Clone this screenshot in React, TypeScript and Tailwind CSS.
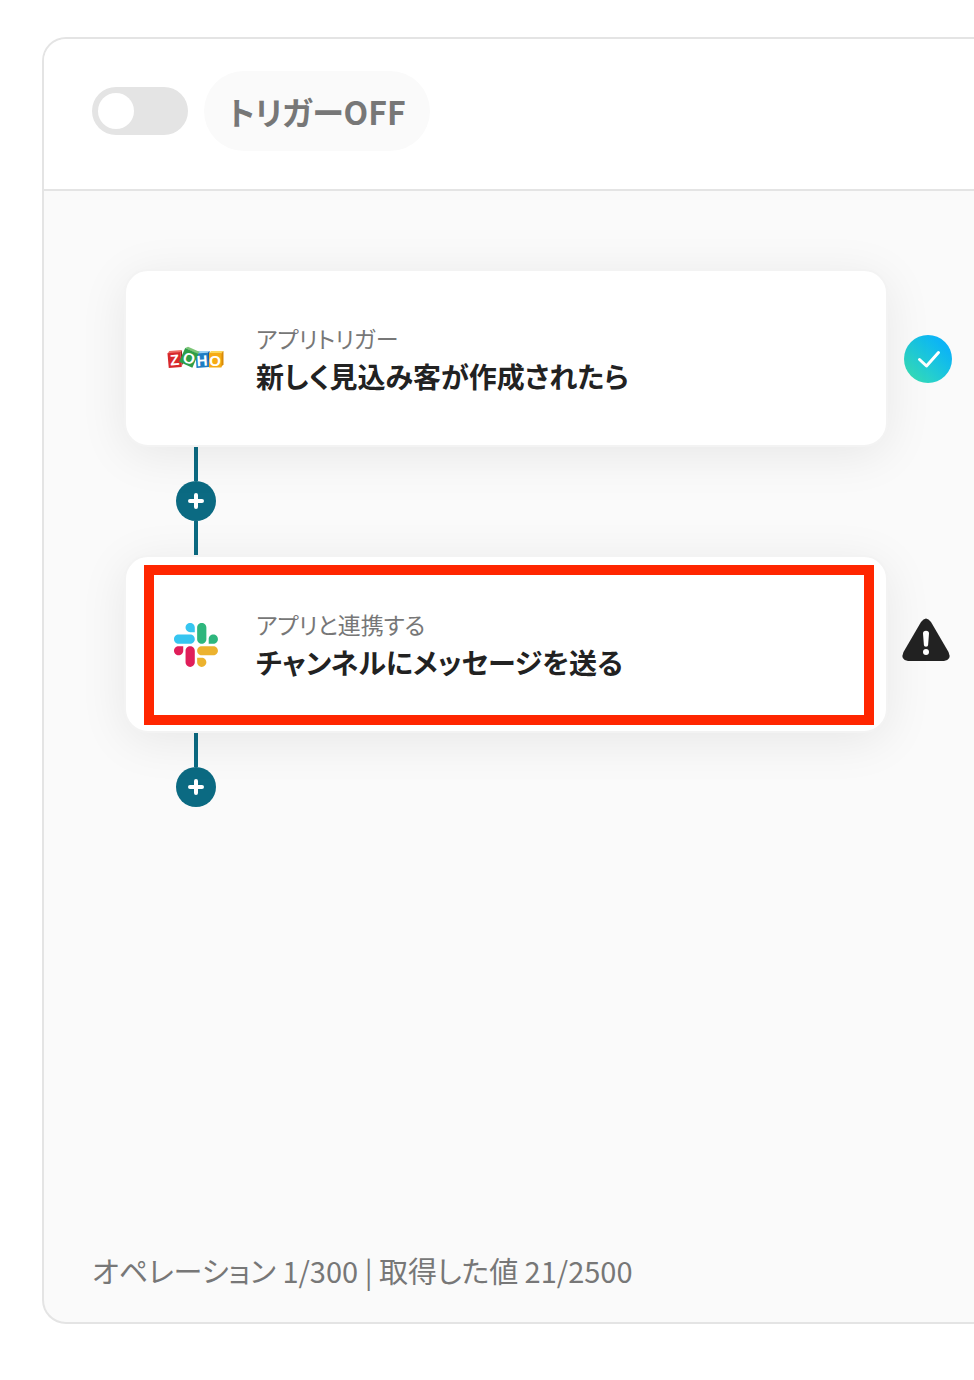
import type { ReactNode } from "react";

const steps = [
  {
    id: "trigger",
    kind: "アプリトリガー",
    title: "新しく見込み客が作成されたら",
    icon: <ZohoLogo />,
    status: <DoneIcon />,
    selected: false,
  },
  {
    id: "action",
    kind: "アプリと連携する",
    title: "チャンネルにメッセージを送る",
    icon: <SlackLogo />,
    status: <WarningIcon />,
    selected: true,
  },
];

function ZohoLogo() {
  return (
    <svg viewBox="0 0 56 24" className="w-14 overflow-visible" role="img" aria-label="Zoho">
      <g transform="rotate(-5 7 12)">
        <path d="M0 6l2-2.500h12.500L13 6z" fill="#ee6a62" />
        <path d="M13 6l1.500-2.500V17L13 20z" fill="#9c1a1c" />
        <rect x="0" y="5.500" width="13" height="15" fill="#d8282b" />
      </g>
      <path d="M28 6.500l2-2.500h12l-1 3z" fill="#9bd0f2" />
      <g transform="rotate(-4 35 13)">
        <path d="M40 6.500l2-2v13l-2 3z" fill="#14549b" />
        <rect x="28" y="6" width="12.500" height="14.500" fill="#1f7dc4" />
      </g>
      <g transform="rotate(24 21 11)">
        <path d="M13.500 3.500l2-2.500h13l-1.500 3z" fill="#7cc576" />
        <rect x="13.500" y="3.500" width="14.500" height="15" fill="#2e9e48" />
      </g>
      <path d="M41 6.500l2-2.500h12.500L54 6.500z" fill="#fbd75b" />
      <path d="M53 6.500L55.500 4v13.500L53 20z" fill="#d98b08" />
      <rect x="41" y="6" width="12.500" height="14.500" fill="#f6ab16" />
      <g fill="#fff" fontFamily="Liberation Sans, sans-serif" fontWeight="700" fontSize="15" textAnchor="middle">
        <text x="6.500" y="18" transform="rotate(-5 7 12)">Z</text>
        <text x="21" y="16.500" transform="rotate(20 21 11)">O</text>
        <text x="34" y="19" transform="rotate(-4 34 13)">H</text>
        <text x="47" y="18.500">O</text>
      </g>
    </svg>
  );
}

function SlackLogo() {
  return (
    <svg viewBox="0 0 123 123" className="w-11" role="img" aria-label="Slack">
      <path fill="#e01e5a" d="M25.800 77.600c0 7.100-5.800 12.900-12.900 12.900S0 84.700 0 77.600s5.800-12.900 12.900-12.900h12.900v12.900zm6.500 0c0-7.100 5.800-12.900 12.900-12.900s12.900 5.800 12.900 12.900v32.300c0 7.100-5.800 12.900-12.900 12.900s-12.900-5.800-12.900-12.900V77.600z" />
      <path fill="#36c5f0" d="M45.200 25.800c-7.100 0-12.900-5.800-12.900-12.900S38.100 0 45.200 0s12.900 5.800 12.900 12.900v12.900H45.200zm0 6.500c7.100 0 12.900 5.800 12.900 12.900s-5.800 12.900-12.900 12.900H12.900C5.800 58.100 0 52.300 0 45.200s5.800-12.900 12.900-12.900h32.300z" />
      <path fill="#2eb67d" d="M97 45.200c0-7.100 5.800-12.900 12.900-12.900s12.900 5.800 12.900 12.900-5.800 12.900-12.900 12.900H97V45.200zm-6.500 0c0 7.100-5.800 12.900-12.900 12.900s-12.900-5.800-12.900-12.900V12.900C64.700 5.800 70.500 0 77.600 0s12.900 5.800 12.900 12.900v32.300z" />
      <path fill="#ecb22e" d="M77.600 97c7.100 0 12.900 5.800 12.900 12.900s-5.800 12.900-12.900 12.900-12.900-5.800-12.900-12.900V97h12.900zm0-6.500c-7.100 0-12.900-5.800-12.900-12.900s5.800-12.900 12.900-12.900h32.300c7.100 0 12.900 5.800 12.900 12.900s-5.800 12.900-12.900 12.900H77.600z" />
    </svg>
  );
}

function DoneIcon() {
  return (
    <span className="grid size-12 place-items-center rounded-full bg-linear-to-tr from-[#36dcb5] from-10% to-[#0db4f5] to-80%">
      <svg viewBox="0 0 48 48" className="size-12" role="img" aria-label="完了">
        <path d="M15.500 24.500l7 6.500L34.500 17.500" fill="none" stroke="#fff" strokeWidth="3" strokeLinecap="round" strokeLinejoin="round" />
      </svg>
    </span>
  );
}

function WarningIcon() {
  return (
    <svg viewBox="0 0 48 48" className="size-12 overflow-visible" role="img" aria-label="未設定">
      <path d="M17 1Q22 -6 27 1L44.500 31Q48 39 40 40H4Q-4 39 -.5 31Z" fill="#222" />
      <path d="M19 12.500a3 2.800 0 0 1 6 0l-.9 11.500a2.100 1.800 0 0 1-4.200 0z" fill="#fff" />
      <circle cx="22" cy="31" r="3" fill="#fff" />
    </svg>
  );
}

function AddStep() {
  return (
    <button aria-label="ステップを追加" className="grid size-10 place-items-center rounded-full bg-[#0b6a82]">
      <svg viewBox="0 0 16 16" className="size-4">
        <path d="M8 2v12M2 8h12" stroke="#fff" strokeWidth="4" strokeLinecap="round" />
      </svg>
    </button>
  );
}

function Line() {
  return <span className="h-[34px] w-1 bg-[#0b6a82]" />;
}

type StepProps = { kind: string; title: string; icon: ReactNode; status: ReactNode; selected: boolean };

function StepCard({ kind, title, icon, status, selected }: StepProps) {
  return (
    <div className="flex items-center gap-4">
      <article className="relative flex h-[178px] flex-1 items-center gap-8 rounded-3xl border-2 border-[#f3f3f3] bg-white pt-0.5 pl-[42px] shadow-[0_8px_48px_rgba(0,0,0,0.08)]">
        <div className="grid w-14 shrink-0 place-items-center">{icon}</div>
        <div className="pb-0.5">
          <p className="text-[23px] leading-9 text-[#777]">{kind}</p>
          <h2 className="text-[28px] leading-10 font-bold text-[#222]">{title}</h2>
        </div>
        {selected && <div className="absolute top-2 right-3 bottom-1.5 left-[18px] border-10 border-[#ff2600]" />}
      </article>
      <div className="w-12 shrink-0 pt-0.5">{status}</div>
    </div>
  );
}

export default function App() {
  return (
    <div className="flex min-h-screen flex-col bg-white pt-[37px] pb-14 pl-[42px] font-['Noto_Sans_CJK_JP',sans-serif] [font-feature-settings:'palt']">
      <main className="flex flex-1 flex-col overflow-hidden rounded-l-3xl border-2 border-r-0 border-[#e4e4e4] bg-[#fafafa]">
        <header className="flex items-center gap-4 border-b-2 border-[#e4e4e4] bg-white px-12 pt-8 pb-[38px]">
          <input
            id="trigger-switch"
            type="checkbox"
            role="switch"
            className="h-12 w-24 appearance-none rounded-full bg-[#e4e4e4] p-1.5 before:block before:size-9 before:rounded-full before:bg-white checked:bg-[#0b6a82] checked:before:ml-auto"
          />
          <label htmlFor="trigger-switch" className="flex h-20 items-center rounded-full bg-[#fafafa] px-6 text-[32px] font-bold text-[#777]">
            トリガーOFF
          </label>
        </header>

        <section className="flex-1 pt-[78px] pr-[22px] pb-20 pl-20">
          {steps.map((s, i) => (
            <div key={s.id}>
              <StepCard {...s} />
              <div className="ml-[52px] flex w-10 flex-col items-center">
                <Line />
                <AddStep />
                {i < steps.length - 1 && <Line />}
              </div>
            </div>
          ))}
        </section>

        <footer className="px-12 pb-[30px] text-[29px] leading-11 text-[#777]">オペレーション 1/300 | 取得した値 21/2500</footer>
      </main>
    </div>
  );
}
